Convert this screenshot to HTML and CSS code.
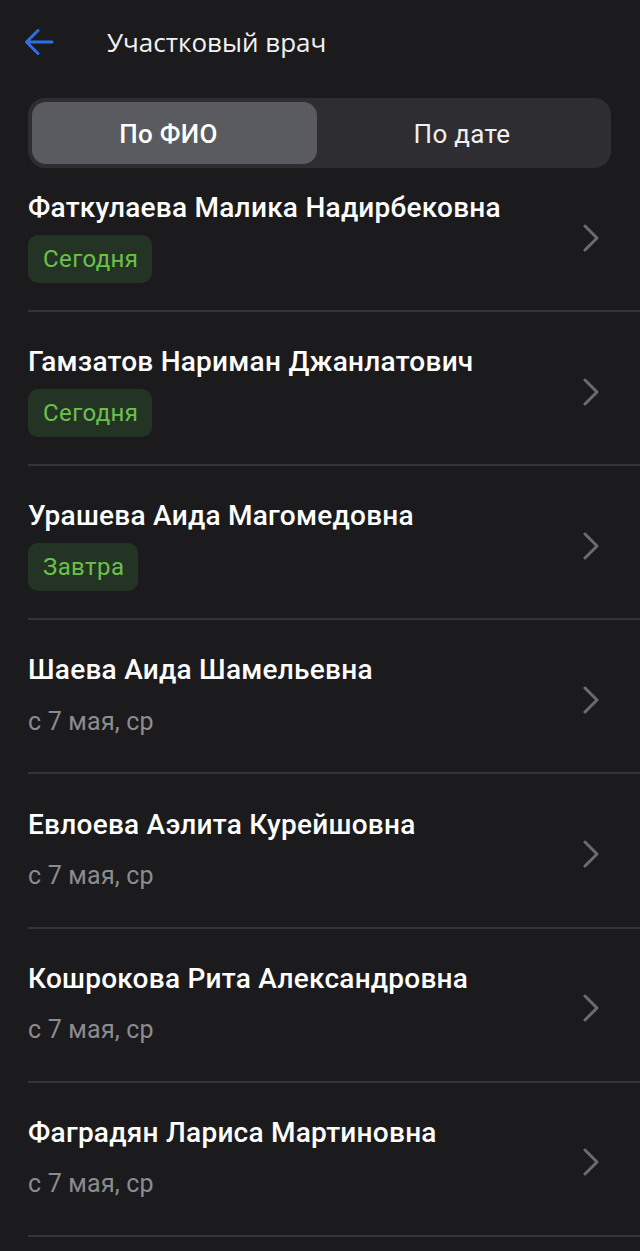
FILE: index.html
```html
<!DOCTYPE html>
<html lang="ru">
<head>
<meta charset="utf-8">
<link rel="stylesheet" href="styles.css">
</head>
<body>
<div class="screen">
  <header class="topbar">
    <svg class="back" width="32" height="32" viewBox="0 0 32 32" aria-hidden="true">
      <path d="M29 16H4M15 4.5L3.5 16L15 27.5" fill="none" stroke="#2f6fe6" stroke-width="3" stroke-linecap="round" stroke-linejoin="round"/>
    </svg>
    <h1 class="title">Участковый врач</h1>
  </header>

  <div class="segmented">
    <div class="seg seg-active">По ФИО</div>
    <div class="seg">По дате</div>
  </div>

  <ul class="list">
    <li class="row row-first">
      <div class="info">
        <div class="name">Фаткулаева Малика Надирбековна</div>
        <div class="badge">Сегодня</div>
      </div>
      <svg class="chev" width="18" height="28" viewBox="0 0 18 28"><path d="M3 2L15 14L3 26" fill="none" stroke="#6b6b6f" stroke-width="3" stroke-linecap="round" stroke-linejoin="round"/></svg>
    </li>
    <li class="row">
      <div class="info">
        <div class="name">Гамзатов Нариман Джанлатович</div>
        <div class="badge">Сегодня</div>
      </div>
      <svg class="chev" width="18" height="28" viewBox="0 0 18 28"><path d="M3 2L15 14L3 26" fill="none" stroke="#6b6b6f" stroke-width="3" stroke-linecap="round" stroke-linejoin="round"/></svg>
    </li>
    <li class="row">
      <div class="info">
        <div class="name">Урашева Аида Магомедовна</div>
        <div class="badge">Завтра</div>
      </div>
      <svg class="chev" width="18" height="28" viewBox="0 0 18 28"><path d="M3 2L15 14L3 26" fill="none" stroke="#6b6b6f" stroke-width="3" stroke-linecap="round" stroke-linejoin="round"/></svg>
    </li>
    <li class="row">
      <div class="info">
        <div class="name">Шаева Аида Шамельевна</div>
        <div class="date">с 7 мая, ср</div>
      </div>
      <svg class="chev" width="18" height="28" viewBox="0 0 18 28"><path d="M3 2L15 14L3 26" fill="none" stroke="#6b6b6f" stroke-width="3" stroke-linecap="round" stroke-linejoin="round"/></svg>
    </li>
    <li class="row">
      <div class="info">
        <div class="name">Евлоева Аэлита Курейшовна</div>
        <div class="date">с 7 мая, ср</div>
      </div>
      <svg class="chev" width="18" height="28" viewBox="0 0 18 28"><path d="M3 2L15 14L3 26" fill="none" stroke="#6b6b6f" stroke-width="3" stroke-linecap="round" stroke-linejoin="round"/></svg>
    </li>
    <li class="row">
      <div class="info">
        <div class="name">Кошрокова Рита Александровна</div>
        <div class="date">с 7 мая, ср</div>
      </div>
      <svg class="chev" width="18" height="28" viewBox="0 0 18 28"><path d="M3 2L15 14L3 26" fill="none" stroke="#6b6b6f" stroke-width="3" stroke-linecap="round" stroke-linejoin="round"/></svg>
    </li>
    <li class="row">
      <div class="info">
        <div class="name">Фаградян Лариса Мартиновна</div>
        <div class="date">с 7 мая, ср</div>
      </div>
      <svg class="chev" width="18" height="28" viewBox="0 0 18 28"><path d="M3 2L15 14L3 26" fill="none" stroke="#6b6b6f" stroke-width="3" stroke-linecap="round" stroke-linejoin="round"/></svg>
    </li>
  </ul>
</div>
</body>
</html>
```

FILE: styles.css
```css
* { box-sizing: border-box; }
html, body {
  margin: 0;
  padding: 0;
  background: #1b1b1e;
}
body {
  font-family: Roboto, "Liberation Sans", sans-serif;
  color: #ffffff;
  overflow: hidden;
}
.screen {
  width: 640px;
  height: 1251px;
  overflow: hidden;
}
.topbar {
  height: 84px;
  display: flex;
  align-items: center;
  padding-left: 23px;
}
.back {
  display: block;
  flex: none;
}
.title {
  margin: 0 0 0 52px;
  font-family: "Open Sans", "Noto Sans", sans-serif;
  font-weight: 400;
  font-size: 26px;
  color: #f2f2f2;
  letter-spacing: 0;
}
.segmented {
  margin: 14px 29px 0 28px;
  height: 70px;
  background: #2e2e32;
  border-radius: 17px;
  padding: 4px;
  display: grid;
  grid-template-columns: 285px 1fr;
}
.seg {
  display: flex;
  align-items: center;
  justify-content: center;
  font-size: 26px;
  font-weight: 400;
  color: #f0f0f0;
  padding-top: 2px;
  letter-spacing: 0.3px;
}
.seg-active {
  background: #5a5b60;
  border-radius: 14px;
  font-weight: 500;
  color: #ffffff;
  padding-right: 12px;
}
.list {
  list-style: none;
  margin: 0;
  padding: 0;
}
.row {
  margin-left: 28px;
  border-bottom: 2px solid #333438;
  padding: 34px 0 27px 0;
  height: 154.17px;
  display: flex;
  align-items: center;
}
.row-first {
  padding-top: 24px;
  height: 144px;
}
.info {
  flex: 1;
  display: flex;
  flex-direction: column;
  align-items: flex-start;
  gap: 11px;
}
.name {
  font-size: 28px;
  font-weight: 500;
  line-height: 32px;
  letter-spacing: 0.25px;
  color: #ffffff;
}
.badge {
  height: 48px;
  display: flex;
  align-items: center;
  padding: 0 14px 0 15px;
  background: #233425;
  border-radius: 10px;
  color: #6cc04a;
  font-size: 24px;
  letter-spacing: 0.4px;
}
.date {
  height: 48px;
  display: flex;
  align-items: center;
  color: #8c8c90;
  font-size: 25px;
  letter-spacing: 0.2px;
}
.chev {
  flex: none;
  margin-right: 40px;
  display: block;
}
```
